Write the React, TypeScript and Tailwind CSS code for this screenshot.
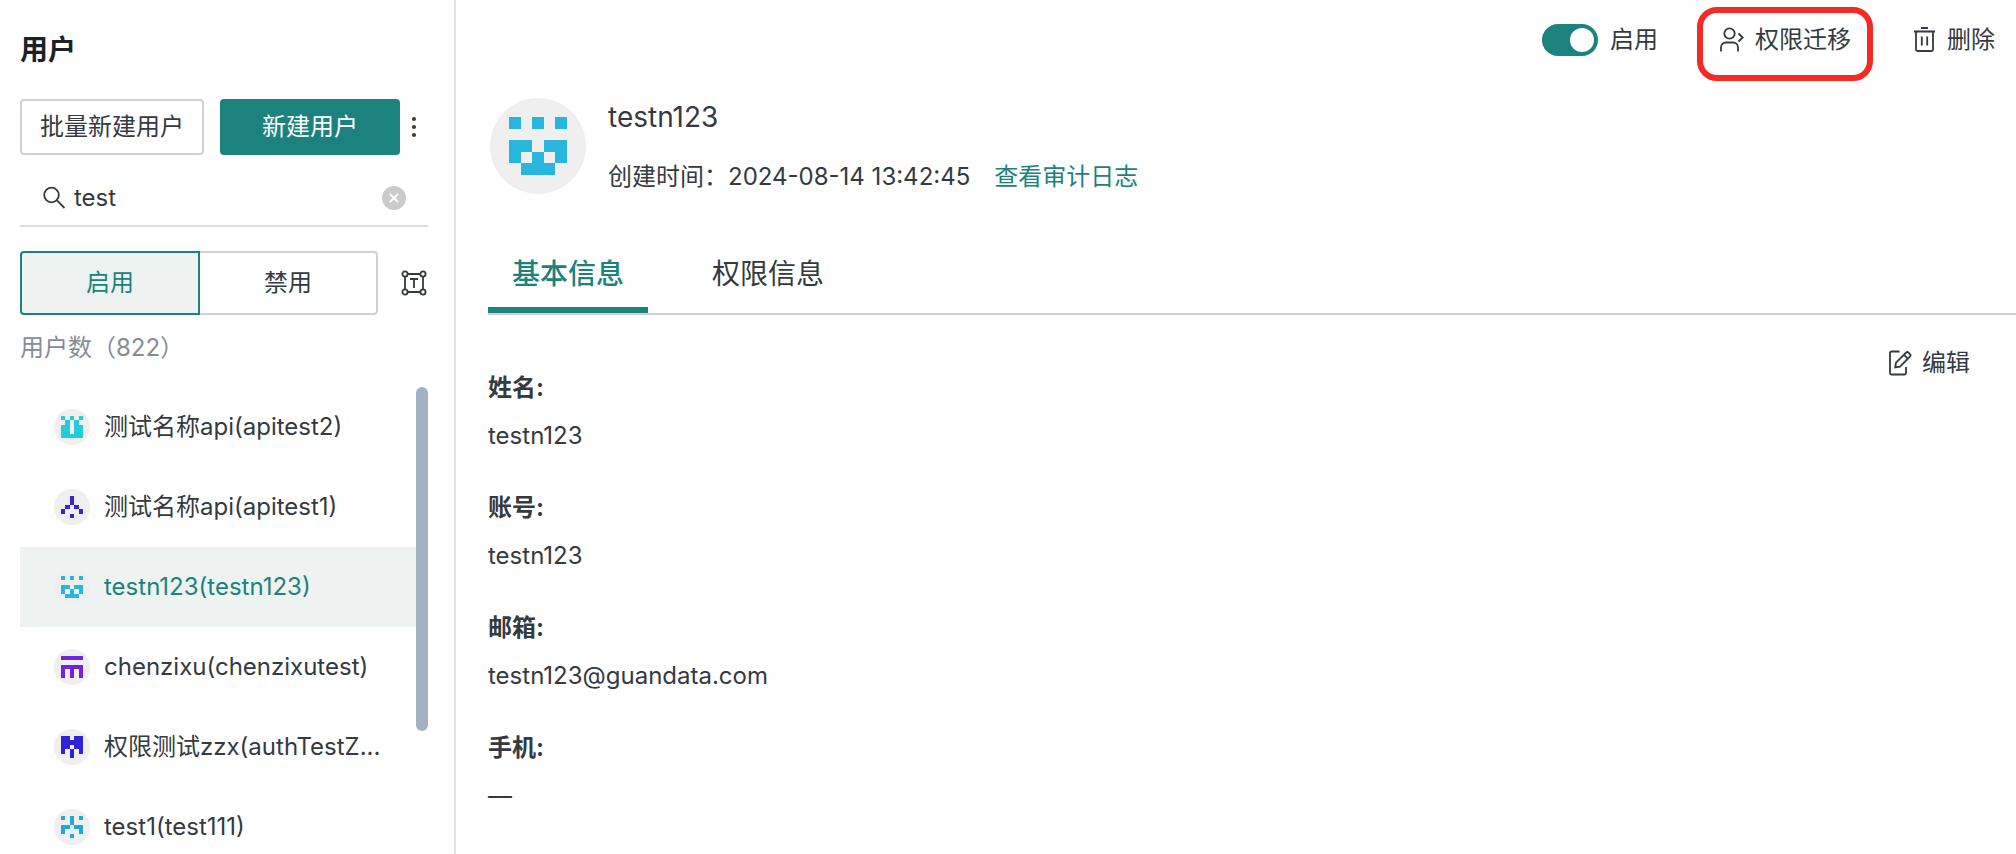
import React, { useState } from "react";

const avatars = {
  castle: { color: "#22ccd8", rows: ["10101", "01010", "11011", "11011", "11111"] },
  arrow: { color: "#3a22d8", rows: ["00100", "00100", "01010", "10001", "00100"] },
  face: { color: "#29b6dc", rows: ["10101", "00000", "11011", "10101", "01110"] },
  comb: { color: "#7722d8", rows: ["11111", "00000", "11111", "10101", "10101"] },
  block: { color: "#2f22d8", rows: ["11011", "11111", "11011", "10101", "00100"] },
  cross: { color: "#22a9d8", rows: ["10101", "00100", "11011", "10001", "00100"] },
};

type AvatarName = keyof typeof avatars;

const users: { id: string; label: string; avatar: AvatarName }[] = [
  { id: "apitest2", label: "测试名称api(apitest2)", avatar: "castle" },
  { id: "apitest1", label: "测试名称api(apitest1)", avatar: "arrow" },
  { id: "testn123", label: "testn123(testn123)", avatar: "face" },
  { id: "chenzixutest", label: "chenzixu(chenzixutest)", avatar: "comb" },
  { id: "authTestZ", label: "权限测试zzx(authTestZ...", avatar: "block" },
  { id: "test111", label: "test1(test111)", avatar: "cross" },
];

const fields = [
  { label: "姓名:", value: "testn123" },
  { label: "账号:", value: "testn123" },
  { label: "邮箱:", value: "testn123@guandata.com" },
  { label: "手机:", value: "—" },
];

const Avatar = ({ name, className }: { name: AvatarName; className: string }) => {
  const { color, rows } = avatars[name];
  return (
    <svg viewBox="0 0 96 96" className={className} aria-hidden="true">
      <circle cx="48" cy="48" r="48" fill="#efefef" />
      <g fill={color} shapeRendering="crispEdges">
        {rows.map((row, y) =>
          row
            .split("")
            .map((cell, x) =>
              cell === "1" ? (
                <rect key={`${x}-${y}`} x={19 + x * 11.6} y={19 + y * 11.6} width="11.6" height="11.6" />
              ) : null
            )
        )}
      </g>
    </svg>
  );
};

const iconProps = {
  viewBox: "0 0 24 24",
  fill: "none",
  stroke: "currentColor",
  strokeWidth: 1.8,
  "aria-hidden": true,
} as const;

const SearchIcon = () => (
  <svg {...iconProps} className="size-6 shrink-0">
    <circle cx="9.5" cy="9" r="7.3" />
    <path d="M14.7 14.2 22.5 22" />
  </svg>
);

const ClearIcon = () => (
  <svg viewBox="0 0 24 24" className="size-6" aria-hidden="true">
    <circle cx="12" cy="12" r="12" fill="#cbcbcb" />
    <path d="m8 8 8 8m0-8-8 8" stroke="#fff" strokeWidth="1.8" />
  </svg>
);

const TextFrameIcon = () => (
  <svg {...iconProps} viewBox="0 0 26 26" className="size-[26px]">
    <circle cx="4" cy="4" r="2.6" />
    <circle cx="22" cy="4" r="2.6" />
    <circle cx="4" cy="22" r="2.6" />
    <circle cx="22" cy="22" r="2.6" />
    <path d="M6.6 4h12.8M6.6 22h12.8M4 6.6v12.8M22 6.6v12.8M9 9h8M13 9v9" />
  </svg>
);

const TransferIcon = () => (
  <svg {...iconProps} viewBox="0 0 26 26" className="size-[26px]">
    <circle cx="10.5" cy="6.5" r="5.2" />
    <path d="M2 24.5v-4a5 5 0 0 1 5-5h7a5 5 0 0 1 5 5v4M19.5 6.5l4.2 4-4.2 4" />
  </svg>
);

const TrashIcon = () => (
  <svg {...iconProps} viewBox="0 0 26 26" className="size-[26px]">
    <path d="M3 4.5h21M10 1h7M5 4.5v18A1.500 1.500 0 0 0 6.500 24h14a1.500 1.500 0 0 0 1.500-1.500v-18M10.800 9.500v9M16.200 9.500v9" />
  </svg>
);

const EditIcon = () => (
  <svg {...iconProps} viewBox="0 0 26 26" className="size-[26px]">
    <path d="M13.500 1.500h-8A1.500 1.500 0 0 0 4 3v20a1.500 1.500 0 0 0 1.500 1.500h13A1.500 1.500 0 0 0 20 23v-6" />
    <path d="m9.200 17.500.8-4.800L20.200 2.500a1.500 1.500 0 0 1 2.100 0l1.800 1.800a1.500 1.500 0 0 1 0 2.100L14 16.700ZM17.900 4.800l3.900 3.900" />
  </svg>
);

const Sidebar = () => {
  const [query, setQuery] = useState("test");
  const [selected, setSelected] = useState("testn123");

  return (
    <aside className="flex w-[456px] shrink-0 flex-col border-r-2 border-[#e0e1ea] px-5">
      <h1 className="mt-8 text-[28px] leading-9 font-bold text-[#1c2126]">用户</h1>
      {/* create buttons */}
      <div className="mt-[31px] flex items-center">
        <button className="h-14 w-[184px] rounded border-2 border-[#cfd0dd]">批量新建用户</button>
        <button className="ml-4 h-14 w-[180px] rounded bg-[#1b827e] text-white">新建用户</button>
        <button aria-label="更多" className="ml-3 flex flex-col gap-1 py-2">
          <span className="size-1 rounded-full bg-[#343a40]" />
          <span className="size-1 rounded-full bg-[#343a40]" />
          <span className="size-1 rounded-full bg-[#343a40]" />
        </button>
      </div>
      {/* search */}
      <div className="mr-[6px] flex h-[72px] items-center border-b-2 border-[#dcdde2] px-[22px] pt-4">
        <SearchIcon />
        <input
          aria-label="搜索用户"
          value={query}
          onChange={(e) => setQuery(e.target.value)}
          className="ml-2 min-w-0 flex-1 outline-none"
        />
        <button aria-label="清空" onClick={() => setQuery("")}>
          <ClearIcon />
        </button>
      </div>
      {/* status filter */}
      <div className="mt-6 flex items-center">
        <button className="h-16 w-[180px] rounded-l border-2 border-[#1b827e] bg-[#eef3f2] text-[#1b827e]">
          启用
        </button>
        <button className="h-16 w-[178px] rounded-r border-2 border-l-0 border-[#cfd0dd]">禁用</button>
        <button aria-label="显示字段" className="ml-[23px]">
          <TextFrameIcon />
        </button>
      </div>
      <p className="mt-[17px] leading-8 text-[#868d95]">用户数（822）</p>
      {/* user list */}
      <div className="mt-[23px] mr-[6px] flex min-h-0 flex-1 overflow-hidden">
        <ul className="min-w-0 flex-1">
          {users.map((user) => (
            <li key={user.id}>
              <button
                onClick={() => setSelected(user.id)}
                className={`flex h-20 w-full items-center gap-[14px] pl-[34px] text-left ${
                  user.id === selected ? "bg-[#eef3f2] text-[#1b827e]" : ""
                }`}
              >
                <Avatar name={user.avatar} className="size-9 shrink-0" />
                <span className="whitespace-nowrap">{user.label}</span>
              </button>
            </li>
          ))}
        </ul>
        <div className="h-[344px] w-3 shrink-0 rounded-full bg-[#a3b1c4]" />
      </div>
    </aside>
  );
};

const UserDetail = () => {
  const [enabled, setEnabled] = useState(true);

  return (
    <main className="min-w-0 flex-1">
      {/* actions */}
      <div className="flex h-20 items-start justify-end pr-[21px]">
        <label className="mt-6 flex h-8 items-center gap-3">
          <input
            type="checkbox"
            role="switch"
            checked={enabled}
            onChange={(e) => setEnabled(e.target.checked)}
            className="peer sr-only"
          />
          <span className="flex h-8 w-14 items-center rounded-full bg-gray-300 p-1 peer-checked:justify-end peer-checked:bg-[#1b827e]">
            <span className="size-6 rounded-full bg-white" />
          </span>
          启用
        </label>
        <button className="mt-[7px] ml-[39px] flex h-[74px] items-start rounded-[20px] border-[6px] border-[#f52a25] px-4 pt-[11px]">
          <span className="flex h-8 items-center gap-[10px]">
            <TransferIcon />
            权限迁移
          </span>
        </button>
        <button className="mt-6 ml-[38px] flex h-8 items-center gap-[10px]">
          <TrashIcon />
          删除
        </button>
      </div>
      {/* profile */}
      <div className="flex items-end gap-[22px] px-[34px] pt-[17px]">
        <Avatar name="face" className="size-24" />
        <div className="h-[97px]">
          <h2 className="text-[28px] leading-10">testn123</h2>
          <p className="mt-6 flex leading-8">
            <span>创建时间：2024-08-14 13:42:45</span>
            <a href="#audit" className="ml-6 text-[#1b827e]">
              查看审计日志
            </a>
          </p>
        </div>
      </div>
      {/* tabs */}
      <nav className="mt-[39px] ml-8 flex gap-10 border-b-2 border-[#cfd0dd] text-[28px]">
        <button className="h-20 w-40 border-b-[6px] border-[#1b827e] pt-[10px] font-medium text-[#1b827e]">
          基本信息
        </button>
        <button className="h-20 w-40 border-b-[6px] border-transparent pt-[10px]">权限信息</button>
      </nav>
      {/* basic info */}
      <section className="flex items-start justify-between pr-[46px] pl-8">
        <dl className="mt-[57px]">
          {fields.map((field) => (
            <div key={field.label} className="h-[120px]">
              <dt className="leading-8 font-bold">{field.label}</dt>
              <dd className="mt-4 leading-8">{field.value}</dd>
            </div>
          ))}
        </dl>
        <button className="mt-8 flex h-8 items-center gap-[10px]">
          <EditIcon />
          编辑
        </button>
      </section>
    </main>
  );
};

export default function App() {
  return (
    <div className="flex h-screen overflow-hidden bg-white font-['Inter','Noto_Sans_CJK_SC',sans-serif] text-2xl text-[#343a40]">
      <Sidebar />
      <UserDetail />
    </div>
  );
}
